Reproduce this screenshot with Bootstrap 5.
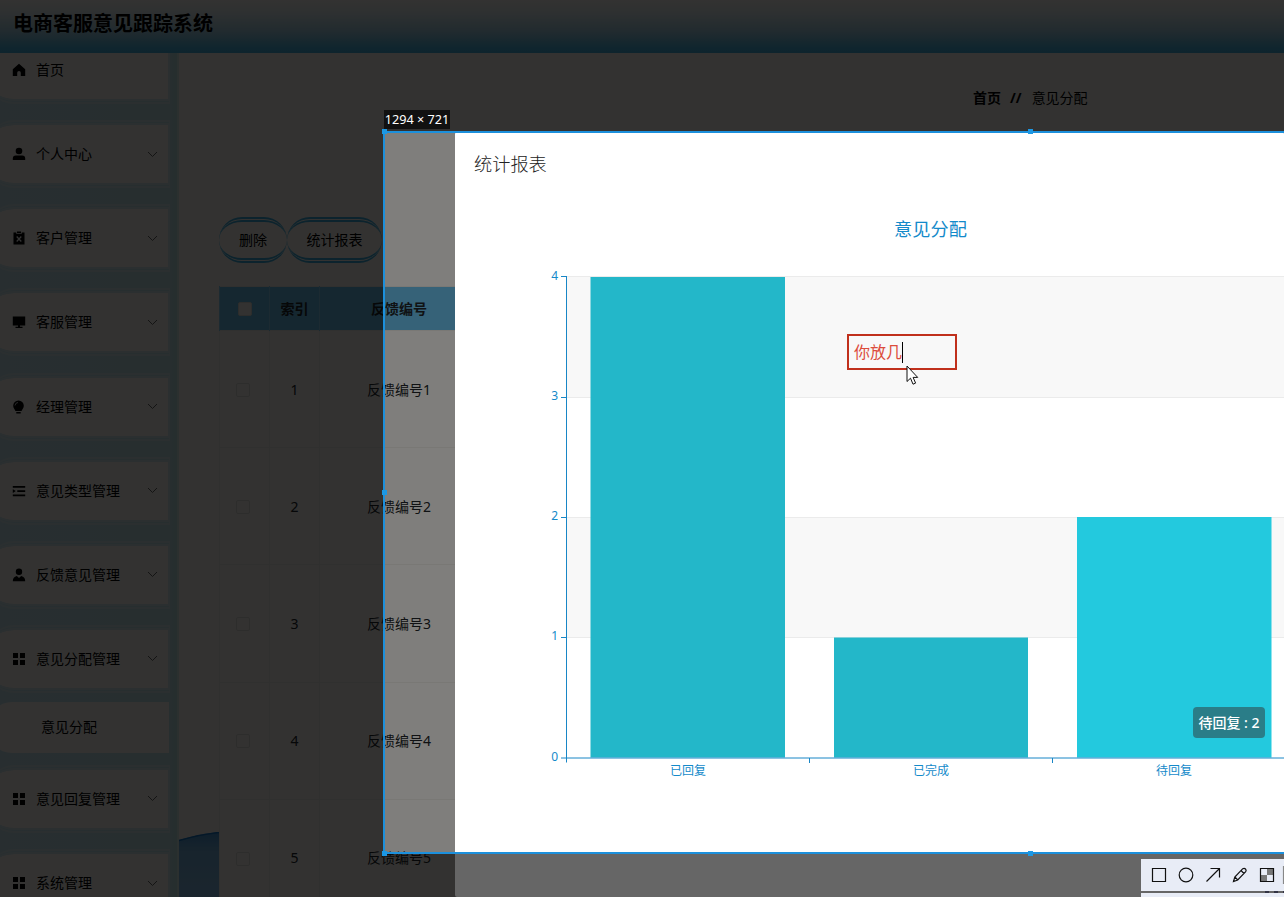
<!DOCTYPE html>
<html lang="zh-CN">
<head>
<meta charset="utf-8">
<meta name="viewport" content="width=device-width, initial-scale=1">
<title>电商客服意见跟踪系统</title>
<link rel="stylesheet" href="https://cdn.jsdelivr.net/npm/bootstrap@5.3.0/dist/css/bootstrap.min.css">
<style>
html,body{height:100%;overflow:hidden}
body{font-family:"Noto Sans","Noto Sans CJK SC",sans-serif;font-size:14px;line-height:20px;color:#000;background:#fffdf8}
.app{height:897px;width:1284px}
.topbar{height:53px;padding:0 0 6px 13px;background:linear-gradient(#fffdfa 0,#e6f2f6 25%,#a8d6ea 60%,#50bce8 90%,#48b4e4)}
.topbar h1{font-size:20px;font-weight:700;letter-spacing:0}
.side{width:179px;height:844px;background:linear-gradient(90deg,#c8e8f2,#c6e8ee 92%,#bfe8e8);border-right:2px solid #daf0ef}
.side-item{flex:none;width:182px;height:68px;margin:0 0 16.15px -12px;padding:0 10px 0 24px;background:#fffdf8;background-clip:padding-box;border:5px double #d8ecf2;border-width:5px 2px 5px 0;border-radius:26px 0 0 26px}
.side-item:first-child{margin-top:-17px}
.side-item.open{margin-bottom:9px}
.side-item svg.ico{width:14px;height:14px;margin-right:10px}
.side-item svg.chev{width:11px;height:7px;margin-left:auto}
.side-sub{flex:none;width:181px;height:51px;margin:0 0 12px -12px;padding-left:53px;background:#fffdf8;border-radius:24px 0 0 24px}
.content-area{height:844px;width:1105px}
.crumbs{height:90px;padding-left:794px}
.crumbs .sep{margin:0 10px 0 9px}
.toolbar-row{padding-top:74px}
.pill{height:46px;color:#000;font-size:14px;background:transparent;border:0 double #40b0e0;border-width:5px 0;border-radius:24px;padding:0}
.grid-table{width:520px;margin:23px 0 0;table-layout:fixed;--bs-table-bg:transparent;border-color:#f2f0ea;text-align:center;vertical-align:middle}
.grid-table th{height:44px;background:#6cc4f0;border-color:#8fd4f8;padding:0;vertical-align:middle}
.grid-table td{height:117.2px;padding:1px 0 0}
.ck{display:inline-block;width:14px;height:14px;border:1px solid #e4e2dc;border-radius:2px;background:#fffdf8;vertical-align:middle;position:relative;top:-1px}
.wave{left:179px;top:832px;width:40px;height:65px}
.shade{inset:0;background:rgba(0,0,0,.5)}
.dialog{left:455px;top:132px;width:829px;height:765px;background:#fff;border-radius:2px}
.dialog h2{font-size:18.2px;line-height:24px;margin:0;padding:20px 0 1px 19px;font-weight:300;color:#222}
.plot{display:block}
.plot text{font-family:"Noto Sans","Noto Sans CJK SC",sans-serif}
.tip{left:1193px;top:707px;width:72px;height:31px;border-radius:4px;background:rgba(50,50,50,.5);color:#fff;font-size:14px;white-space:nowrap;font-weight:500}
.crop{left:383px;top:131px;width:1295px;height:723px;border:1px solid #1c90dc;border-left-width:2px;box-shadow:0 0 0 2000px rgba(0,0,0,.6)}
.crop-edge{left:385px;width:899px;height:2px;background:#1c90dc}
.knob{width:5px;height:5px;background:#1c98e4}
.dims{left:384px;top:110px;width:66px;height:19px;background:#111;color:#fff;font-size:12.700px;line-height:18px;white-space:nowrap}
.note{left:847px;top:334px;width:110px;height:36px;border:2px solid #c0301c;color:#dc4c3c;font-size:16px;padding-left:5px;font-weight:400}
.caret{width:1px;height:21px;background:#000}
.tools{left:1141px;top:859px;width:143px;height:38px;background:#e8ecf6}
</style>
<script src="https://cdn.jsdelivr.net/npm/bootstrap@5.3.0/dist/js/bootstrap.bundle.min.js"></script>
</head>
<body>
<svg class="d-none">
  <symbol id="chev" viewBox="0 0 11 7"><path d="M1 1l4.500 4.500L10 1" fill="none" stroke="#666" stroke-width="1"/></symbol>
  <symbol id="grid" viewBox="0 0 14 14"><path d="M1 1h5v5H1zM8 1h5v5H8zM1 8h5v5H1zM8 8h5v5H8z"/></symbol>
</svg>
<div class="app position-relative overflow-hidden">
  <header class="topbar d-flex align-items-center"><h1 class="m-0">电商客服意见跟踪系统</h1></header>
  <div class="d-flex">
    <nav class="side d-flex flex-column overflow-hidden">
      <div class="side-item d-flex align-items-center"><svg class="ico" viewBox="0 0 14 14"><path d="M7 .8L.8 6.200V13h4.400V9.800a1.800 1.800 0 0 1 3.600 0V13h4.400V6.200z"/></svg>首页</div>
      <div class="side-item d-flex align-items-center"><svg class="ico" viewBox="0 0 14 14"><circle cx="7" cy="4" r="3.300"/><path d="M.8 13v-1.500q0-3 3-3h6.400q3 0 3 3V13z"/></svg>个人中心<svg class="chev"><use href="#chev"/></svg></div>
      <div class="side-item d-flex align-items-center"><svg class="ico" viewBox="0 0 14 14"><path d="M1.500 1.500h2.700v1.300h5.600V1.500h2.700v12h-11z"/><path d="M5 .5h4v1.500H5z"/><path d="M4.700 5.500l4.600 5M9.300 5.500l-4.600 5" stroke="#fff" stroke-width="1.300"/></svg>客户管理<svg class="chev"><use href="#chev"/></svg></div>
      <div class="side-item d-flex align-items-center"><svg class="ico" viewBox="0 0 14 14"><path d="M.8 1.500h12.400v9H.8zM6 10.500h2v1.200h2.500V13h-7v-1.300H6z"/></svg>客服管理<svg class="chev"><use href="#chev"/></svg></div>
      <div class="side-item d-flex align-items-center"><svg class="ico" viewBox="0 0 14 14"><path d="M6.500.5a5.300 5.300 0 0 1 5.300 5.300c0 2.500-1.500 3.400-2.300 5.200h-6C2.700 9.200 1.200 8.300 1.200 5.800A5.300 5.300 0 0 1 6.500.5zM4.300 12h4.400v1.500H4.300z"/><path d="M3 5.500Q3.300 2.700 6 2.500" fill="none" stroke="#ccc"/></svg>经理管理<svg class="chev"><use href="#chev"/></svg></div>
      <div class="side-item d-flex align-items-center"><svg class="ico" viewBox="0 0 14 14"><path d="M.8 2h12.400v1.800H.8zM5.300 6.200h7.900V8H5.300zM.8 10.500h12.400v1.800H.8zM.8 5.200L3.800 7.100.8 9z"/></svg>意见类型管理<svg class="chev"><use href="#chev"/></svg></div>
      <div class="side-item d-flex align-items-center"><svg class="ico" viewBox="0 0 14 14"><circle cx="7" cy="3.800" r="3.200"/><path d="M.8 13.300q0-4.600 4-5.400L7 10l2.200-2.100q4 .8 4 5.400z"/></svg>反馈意见管理<svg class="chev"><use href="#chev"/></svg></div>
      <div class="side-item open d-flex align-items-center"><svg class="ico"><use href="#grid"/></svg>意见分配管理<svg class="chev"><use href="#chev"/></svg></div>
      <div class="side-sub d-flex align-items-center">意见分配</div>
      <div class="side-item d-flex align-items-center"><svg class="ico"><use href="#grid"/></svg>意见回复管理<svg class="chev"><use href="#chev"/></svg></div>
      <div class="side-item d-flex align-items-center"><svg class="ico"><use href="#grid"/></svg>系统管理<svg class="chev"><use href="#chev"/></svg></div>
    </nav>
    <main class="content-area overflow-hidden">
      <div class="crumbs d-flex align-items-center"><b>首页</b><b class="sep">//</b><span>意见分配</span></div>
      <div class="ps-4 ms-3">
        <div class="toolbar-row d-flex">
          <button class="pill" type="button" style="width:68px">删除</button>
          <button class="pill" type="button" style="width:95px">统计报表</button>
        </div>
        <table class="grid-table table table-bordered">
          <colgroup><col style="width:50px"><col style="width:50px"><col style="width:159px"><col></colgroup>
          <thead><tr><th><span class="ck"></span></th><th>索引</th><th>反馈编号</th><th></th></tr></thead>
          <tbody>
            <tr><td><span class="ck me-1"></span></td><td>1</td><td>反馈编号1</td><td></td></tr>
            <tr><td><span class="ck me-1"></span></td><td>2</td><td>反馈编号2</td><td></td></tr>
            <tr><td><span class="ck me-1"></span></td><td>3</td><td>反馈编号3</td><td></td></tr>
            <tr><td><span class="ck me-1"></span></td><td>4</td><td>反馈编号4</td><td></td></tr>
            <tr><td><span class="ck me-1"></span></td><td>5</td><td>反馈编号5</td><td></td></tr>
          </tbody>
        </table>
      </div>
    </main>
  </div>
  <svg class="wave position-absolute" viewBox="0 0 40 65"><defs><linearGradient id="w" x2="0" y2="1"><stop stop-color="#4898d8"/><stop offset=".3" stop-color="#78b4e0"/><stop offset="1" stop-color="#88bce8"/></linearGradient></defs><path d="M0 8Q20 2 40 0V65H0z" fill="url(#w)"/><path d="M0 8.500Q20 2.500 40 .5" fill="none" stroke="#1878c8" stroke-width="1.500"/></svg>
  <div class="shade position-absolute"></div>

  <section class="dialog position-absolute">
    <h2>统计报表</h2>
    <svg class="plot" width="829" height="620" viewBox="455 177 829 620">
      <path d="M567 277h717v120H567zM567 517h717v120H567z" fill="#f8f8f8"/>
      <path d="M567 276.500h717M567 397.500h717M567 517.500h717M567 637.500h717" stroke="#ebebeb"/>
      <path d="M590.500 277H785v480.500H590.500zM834 637.500h194v120H834z" fill="#23b7c9"/>
      <path d="M1077 517h194.500v240.500H1077z" fill="#23c9de"/>
      <path d="M566.500 276v486.500M561 276.500h5M561 397.500h5M561 517.500h5M561 637.500h5M561 758h723M809.500 758v5M1052.500 758v5" fill="none" stroke="#1886c6"/>
      <g fill="#148aca" font-size="12" text-anchor="end"><text x="558" y="280">4</text><text x="558" y="400">3</text><text x="558" y="520">2</text><text x="558" y="640">1</text><text x="558" y="761">0</text></g>
      <g fill="#148aca" font-size="12" text-anchor="middle"><text x="688" y="775">已回复</text><text x="931" y="775">已完成</text><text x="1174" y="775">待回复</text><text x="930.5" y="236" font-size="18.200">意见分配</text></g>
    </svg>
  </section>
  <div class="tip position-absolute d-flex align-items-center justify-content-center">待回复 : 2</div>

  <div class="crop position-absolute"></div>
  <i class="crop-edge position-absolute" style="top:131px"></i>
  <i class="crop-edge position-absolute" style="top:852px"></i>
  <i class="knob position-absolute" style="left:382px;top:129px"></i>
  <i class="knob position-absolute" style="left:1028px;top:129px"></i>
  <i class="knob position-absolute" style="left:382px;top:490px"></i>
  <i class="knob position-absolute" style="left:382px;top:851px"></i>
  <i class="knob position-absolute" style="left:1028px;top:851px"></i>
  <div class="dims position-absolute text-center">1294 × 721</div>
  <div class="note position-absolute d-flex align-items-center">你放几<span class="caret"></span></div>
  <svg class="position-absolute" style="left:906px;top:365px" width="13" height="21" viewBox="0 0 13 21"><path d="M1 1v15.500l3.500-3.300 2.500 6 2.600-1.100-2.500-5.700h4.600z" fill="#fff" stroke="#111"/></svg>
  <div class="tools position-absolute">
    <svg width="143" height="38" viewBox="0 0 143 38" fill="none" stroke="#111" stroke-width="1.200">
      <path d="M0 33h143" stroke="#666" stroke-width="2"/>
      <path d="M11.500 9.500h13v13h-13z"/><circle cx="45" cy="16" r="6.800"/>
      <path d="M65.500 22.500L78.500 9.500M69.500 9.500h9v9"/>
      <path d="M92.500 22.500l1.300-4.500 8-8.300q1.500-1 2.700.3t.2 2.700l-8 8.300zM100 11.500l3 3M93.800 18l3 3"/>
      <path d="M126 10h6v6h-6zM120 16h6v6h-6z" fill="#777" stroke="none"/><path d="M119.500 9.500h13v13h-13z"/>
      <path d="M142.500 7v18" stroke="#888"/><path d="M124 33h4M133 33h4M142 33h1" stroke="#334" stroke-width="2"/>
    </svg>
  </div>
</div>
</body>
</html>
